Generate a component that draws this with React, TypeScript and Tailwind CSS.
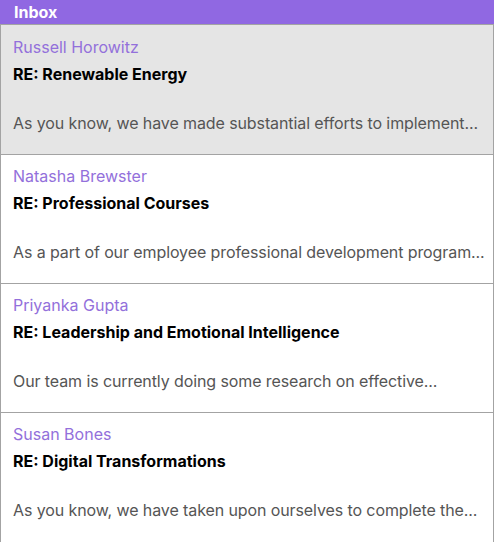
import React from 'react';

interface Message {
    id: number;
    from: string;
    subject: string;
    preview: string;
}

const messages: Message[] = [
    {
        id: 1,
        from: 'Russell Horowitz',
        subject: 'RE: Renewable Energy',
        preview: 'As you know, we have made substantial efforts to implement...',
    },
    {
        id: 2,
        from: 'Natasha Brewster',
        subject: 'RE: Professional Courses',
        preview: 'As a part of our employee professional development program...',
    },
    {
        id: 3,
        from: 'Priyanka Gupta',
        subject: 'RE: Leadership and Emotional Intelligence',
        preview: 'Our team is currently doing some research on effective...',
    },
    {
        id: 4,
        from: 'Susan Bones',
        subject: 'RE: Digital Transformations',
        preview: 'As you know, we have taken upon ourselves to complete the...',
    },
];

export default function App() {
    const selected = 1;

    return (
        <div className="w-[494px] h-[542px] bg-white" style={{ fontFamily: 'Inter, "Noto Sans", sans-serif' }}>
            <div className="h-6 bg-[#9068e2] px-[14px] text-base leading-6 font-bold text-white">Inbox</div>
            <ul className="border border-[#a3a3a3]">
                {messages.map((m, i) => (
                    <li
                        key={m.id}
                        className={`px-3 ${i === 0 ? 'h-[130px] pt-[10px]' : 'h-[129px] pt-[9px]'} ${
                            i < messages.length - 1 ? 'border-b border-[#a3a3a3]' : ''
                        } ${m.id === selected ? 'bg-[#e5e5e5]' : 'bg-white'}`}
                    >
                        <div className="text-base leading-6 text-[#9370db]">{m.from}</div>
                        <div className="mt-[3px] text-base leading-6 font-bold text-black">{m.subject}</div>
                        <div className="mt-[25px] text-base leading-6 text-[#555555] whitespace-nowrap tracking-[-0.1px]">
                            {m.preview}
                        </div>
                    </li>
                ))}
            </ul>
        </div>
    );
}
